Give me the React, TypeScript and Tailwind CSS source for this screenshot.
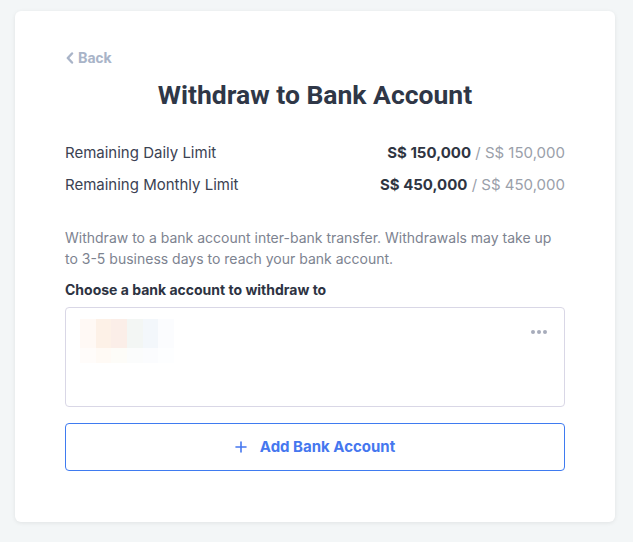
import React from "react";

const swatchTop = ["#fff9f5", "#fdf1e7", "#fbeee8", "#f3f6f4", "#f3f7fb", "#fbfcfe"];
const swatchBottom = ["#fffcfa", "#fffaf5", "#fdfcf8", "#fbfcfc", "#fbfcfe", "#fdfeff"];

function LimitRow({ label, value, total }: { label: string; value: string; total: string }) {
  return (
    <div className="flex items-center justify-between text-[15px] leading-[22px]">
      <span className="text-[#3b4252]">{label}</span>
      <span>
        <span className="font-bold text-[#2f3542]">{value}</span>
        <span className="text-[#9aa0aa]"> / {total}</span>
      </span>
    </div>
  );
}

export default function App() {
  return (
    <div
      className="min-h-[542px] bg-[#f3f6f7] pl-[15px] pr-[18px] pt-[11px] pb-[21px]"
      style={{ fontFamily: "Inter, 'Noto Sans', sans-serif" }}
    >
      <div className="rounded-md bg-white px-[50px] pt-[38px] pb-[51px] shadow-[0_1px_4px_rgba(0,0,0,0.08)]">
        <button
          className="flex items-center gap-[3px] text-[15px] font-bold leading-[18px] text-[#a9b4c8]"
          style={{ fontFamily: "Roboto, sans-serif" }}
        >
          <svg width="10" height="12" viewBox="0 0 10 12" fill="none">
            <path d="M7 1.5 2.8 6 7 10.5" stroke="#a9b4c8" strokeWidth="2.4" strokeLinecap="round" strokeLinejoin="round" />
          </svg>
          Back
        </button>

        <h1
          className="mt-[12px] text-center text-[26.5px] font-bold leading-[32px] text-[#2f3747]"
          style={{ fontFamily: "Roboto, sans-serif" }}
        >
          Withdraw to Bank Account
        </h1>

        <div className="mt-[31px] flex flex-col gap-[10px]">
          <LimitRow label="Remaining Daily Limit" value="S$ 150,000" total="S$ 150,000" />
          <LimitRow label="Remaining Monthly Limit" value="S$ 450,000" total="S$ 450,000" />
        </div>

        <p className="mt-[31px] text-[14px] leading-[21px] text-[#7d8390]">
          Withdraw to a bank account inter-bank transfer. Withdrawals may take up to 3-5 business days to reach your bank account.
        </p>

        <h2 className="mt-[11px] text-[14px] font-bold leading-[20px] text-[#2d3342]">
          Choose a bank account to withdraw to
        </h2>

        <div className="relative mt-[7px] h-[100px] rounded border border-[#d9d7e6] px-[14px] pt-[11px]">
          <div className="flex flex-col">
            <div className="flex">
              {swatchTop.map((c, i) => (
                <div key={i} className="h-[29px] w-[15.7px]" style={{ backgroundColor: c }} />
              ))}
            </div>
            <div className="flex">
              {swatchBottom.map((c, i) => (
                <div key={i} className="h-[15px] w-[15.7px]" style={{ backgroundColor: c }} />
              ))}
            </div>
          </div>
          <div className="absolute right-[17px] top-[22px] flex gap-[2px]">
            <span className="h-[4px] w-[4px] rounded-full bg-[#a7acbb]" />
            <span className="h-[4px] w-[4px] rounded-full bg-[#a7acbb]" />
            <span className="h-[4px] w-[4px] rounded-full bg-[#a7acbb]" />
          </div>
        </div>

        <button className="mt-[16px] flex h-[48px] w-full items-center justify-center gap-[13px] rounded border border-[#3f7bf0] text-[15px] font-bold text-[#4577ef]">
          <svg width="12" height="12" viewBox="0 0 12 12" fill="none">
            <path d="M6 1v10M1 6h10" stroke="#4577ef" strokeWidth="1.6" strokeLinecap="round" />
          </svg>
          Add Bank Account
        </button>
      </div>
    </div>
  );
}
